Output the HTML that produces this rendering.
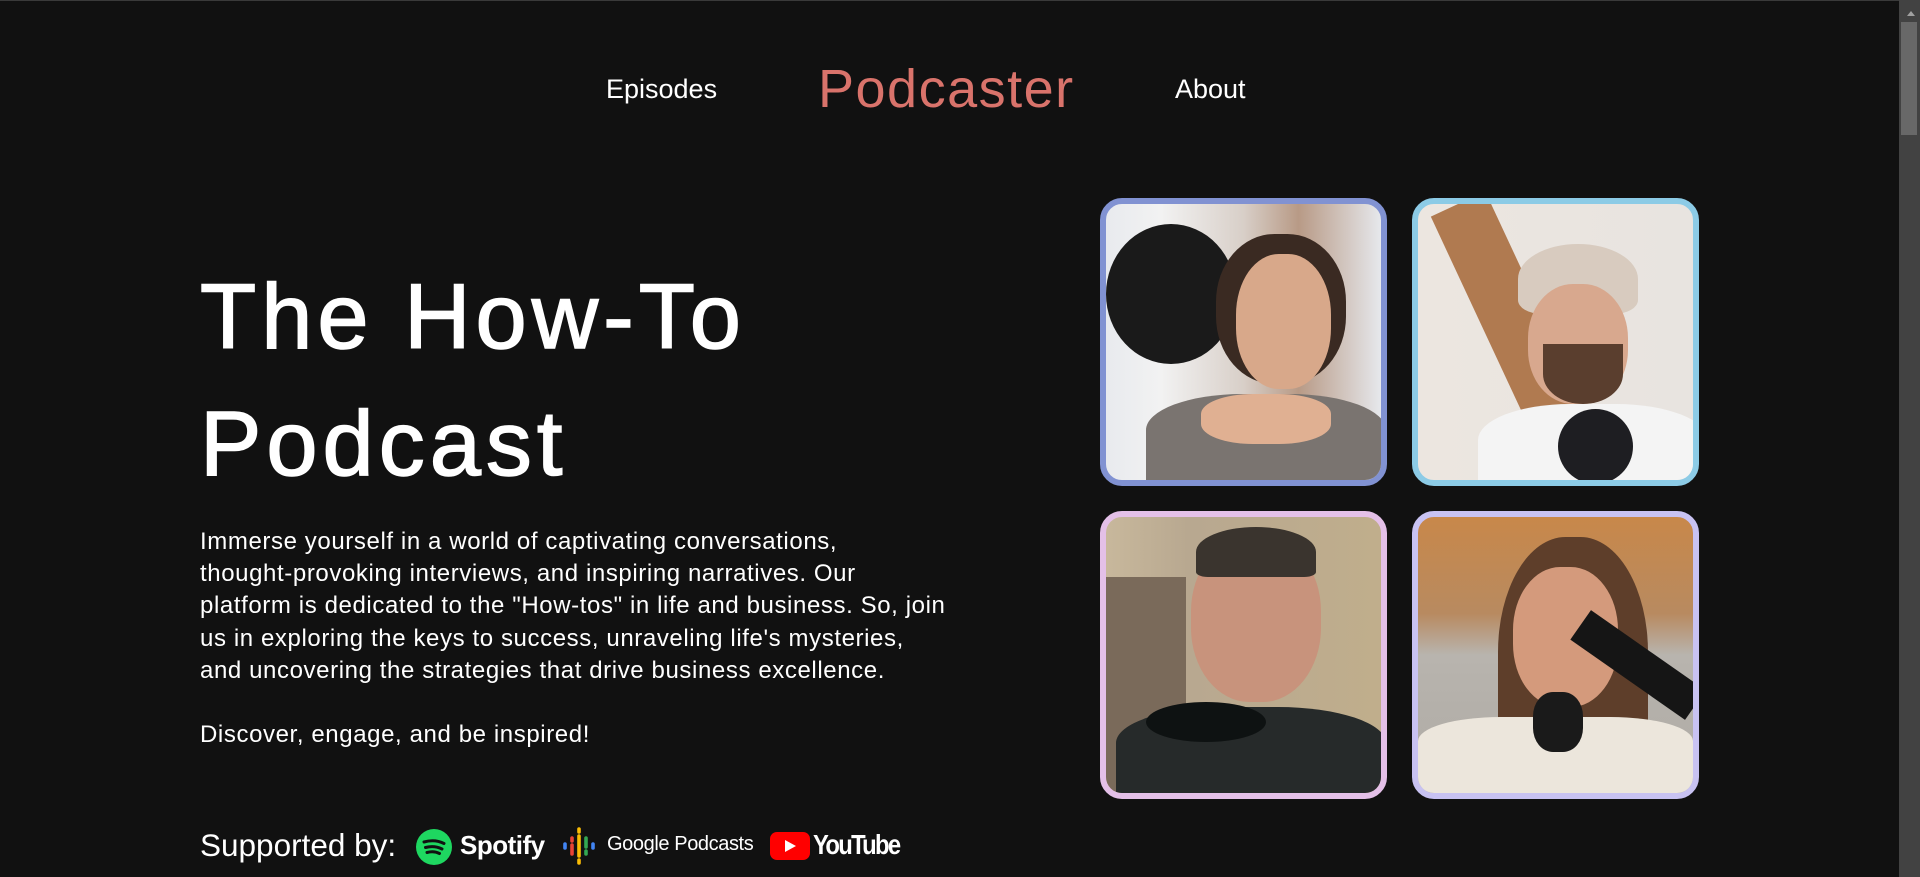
<!DOCTYPE html>
<html><head><meta charset="utf-8"><style>
html,body{margin:0;padding:0}
body{width:1920px;height:877px;background:#111111;position:relative;overflow:hidden;font-family:"Liberation Sans",sans-serif;color:#fff}
.a{position:absolute;white-space:nowrap}
.nav{font-size:27px;top:74px}
.card{position:absolute;width:275px;height:276px;border:6px solid;border-radius:22px;overflow:hidden;box-sizing:content-box}
p{margin:0}
</style></head><body>
<div class="a" style="left:0;top:0;width:1899px;height:1px;background:#3a3a3a"></div>
<div class="a" style="left:1899px;top:0;width:21px;height:877px;background:#424242"></div>
<div class="a" style="left:1907px;top:11px;width:0;height:0;border-left:4px solid transparent;border-right:4px solid transparent;border-bottom:5px solid #a0a0a0"></div>
<div class="a" style="left:1901px;top:22px;width:16px;height:113px;background:#686868"></div>

<div class="a nav" style="left:606px">Episodes</div>
<div class="a" style="left:818px;top:58px;font-size:54px;color:#d9736b;letter-spacing:1.5px">Podcaster</div>
<div class="a nav" style="left:1175px">About</div>

<div class="a" style="left:200px;top:254px;font-size:92px;line-height:127px;letter-spacing:5px;-webkit-text-stroke:1.5px #fff">The How-To<br>Podcast</div>

<div class="a" style="left:200px;top:526px;font-size:24px;line-height:32.2px;letter-spacing:0.6px">Immerse yourself in a world of captivating conversations,<br>thought-provoking interviews, and inspiring narratives. Our<br>platform is dedicated to the "How-tos" in life and business. So, join<br>us in exploring the keys to success, unraveling life's mysteries,<br>and uncovering the strategies that drive business excellence.<br><br>Discover, engage, and be inspired!</div>

<div class="a" style="left:200px;top:827px;font-size:31.5px">Supported by:</div>
<svg class="a" style="left:416px;top:829px" width="36" height="36" viewBox="0 0 36 36"><circle cx="18" cy="18" r="18" fill="#1ed760"/><path d="M8 13c7-2 14-1.5 20 1.5M9.5 18.5c6-1.6 11.5-1 16.5 1.5M11 23.5c4.5-1.2 9-.8 12.5 1" stroke="#111" stroke-width="3" fill="none" stroke-linecap="round"/></svg>
<div class="a" style="left:460px;top:830px;font-size:26px;font-weight:bold;letter-spacing:-0.5px">Spotify</div>
<svg class="a" style="left:562px;top:827px" width="34" height="38" viewBox="0 0 34 38"><g stroke-width="3.6" stroke-linecap="round"><line x1="3" y1="17" x2="3" y2="21" stroke="#4285f4"/><line x1="31" y1="17" x2="31" y2="21" stroke="#4285f4"/><line x1="10" y1="11" x2="10" y2="14" stroke="#ea4335"/><line x1="10" y1="18" x2="10" y2="27" stroke="#ea4335"/><line x1="24" y1="11" x2="24" y2="20" stroke="#34a853"/><line x1="24" y1="24" x2="24" y2="27" stroke="#34a853"/><line x1="17" y1="2" x2="17" y2="5" stroke="#fbbc04"/><line x1="17" y1="9" x2="17" y2="29" stroke="#fbbc04"/><line x1="17" y1="33" x2="17" y2="36" stroke="#fbbc04"/></g></svg>
<div class="a" style="left:607px;top:833px;font-size:20px;letter-spacing:-0.4px">Google Podcasts</div>
<svg class="a" style="left:770px;top:832px" width="40" height="28" viewBox="0 0 40 28"><rect width="40" height="28" rx="7" fill="#ff0000"/><path d="M15 8l11 6-11 6z" fill="#fff"/></svg>
<div class="a" style="left:813px;top:829px;font-size:28px;font-weight:bold;letter-spacing:-2px;transform:scaleX(0.85);transform-origin:left">YouTube</div>

<div class="card" style="left:1100px;top:198px;border-color:#8192d2;background:linear-gradient(90deg,#e8eaee 0%,#f2f2f2 20%,#d8cfc8 50%,#b89a86 70%,#e6e8ec 100%)">
 <div class="a" style="left:0;top:20px;width:130px;height:140px;border-radius:50%;background:#1a1a1a"></div>
 <div class="a" style="left:110px;top:30px;width:130px;height:150px;border-radius:45%;background:#3a2a22"></div>
 <div class="a" style="left:130px;top:50px;width:95px;height:135px;border-radius:45%;background:#d8a88a"></div>
 <div class="a" style="left:40px;top:190px;width:240px;height:90px;border-radius:40% 40% 0 0;background:#7a7470"></div>
 <div class="a" style="left:95px;top:190px;width:130px;height:50px;border-radius:40%;background:#e0b092"></div>
</div>
<div class="card" style="left:1412px;top:198px;border-color:#8ccbe6;background:linear-gradient(90deg,#ece6e0 0%,#e8e4e0 100%)">
 <div class="a" style="left:10px;top:0;width:60px;height:290px;background:#b07a50;transform:rotate(-25deg);transform-origin:top"></div>
 <div class="a" style="left:100px;top:40px;width:120px;height:70px;border-radius:50% 50% 20% 20%;background:#d8cbbf"></div>
 <div class="a" style="left:110px;top:80px;width:100px;height:120px;border-radius:45%;background:#d8a88e"></div>
 <div class="a" style="left:125px;top:140px;width:80px;height:60px;border-radius:0 0 50% 50%;background:#5a3e2e"></div>
 <div class="a" style="left:60px;top:200px;width:230px;height:90px;border-radius:40% 40% 0 0;background:#f4f4f4"></div>
 <div class="a" style="left:140px;top:205px;width:75px;height:75px;border-radius:50%;background:#1e1e22"></div>
</div>
<div class="card" style="left:1100px;top:511px;border-color:#e4c0e8;background:linear-gradient(90deg,#c8b89c 0%,#b8a890 30%,#c0ae8c 100%)">
 <div class="a" style="left:0;top:60px;width:80px;height:216px;background:#7a6a5a"></div>
 <div class="a" style="left:85px;top:20px;width:130px;height:165px;border-radius:45%;background:#c8937c"></div>
 <div class="a" style="left:90px;top:10px;width:120px;height:50px;border-radius:50% 50% 10% 10%;background:#3a342e"></div>
 <div class="a" style="left:10px;top:190px;width:270px;height:90px;border-radius:40% 40% 0 0;background:#262a2a"></div>
 <div class="a" style="left:40px;top:185px;width:120px;height:40px;border-radius:50%;background:#0e1212"></div>
</div>
<div class="card" style="left:1412px;top:511px;border-color:#c8c2f2;background:linear-gradient(180deg,#c8884a 0%,#b88a60 35%,#b8b4ae 50%,#aeaaa4 100%)">
 <div class="a" style="left:80px;top:20px;width:150px;height:256px;border-radius:45% 45% 10% 10%;background:#5e3e2a"></div>
 <div class="a" style="left:95px;top:50px;width:105px;height:140px;border-radius:45%;background:#d49a7c"></div>
 <div class="a" style="left:0;top:200px;width:275px;height:80px;border-radius:30% 30% 0 0;background:#ece6dc"></div>
 <div class="a" style="left:150px;top:130px;width:140px;height:36px;background:#151515;transform:rotate(35deg)"></div>
 <div class="a" style="left:115px;top:175px;width:50px;height:60px;border-radius:40%;background:#1a1a1a"></div>
</div>
</body></html>
